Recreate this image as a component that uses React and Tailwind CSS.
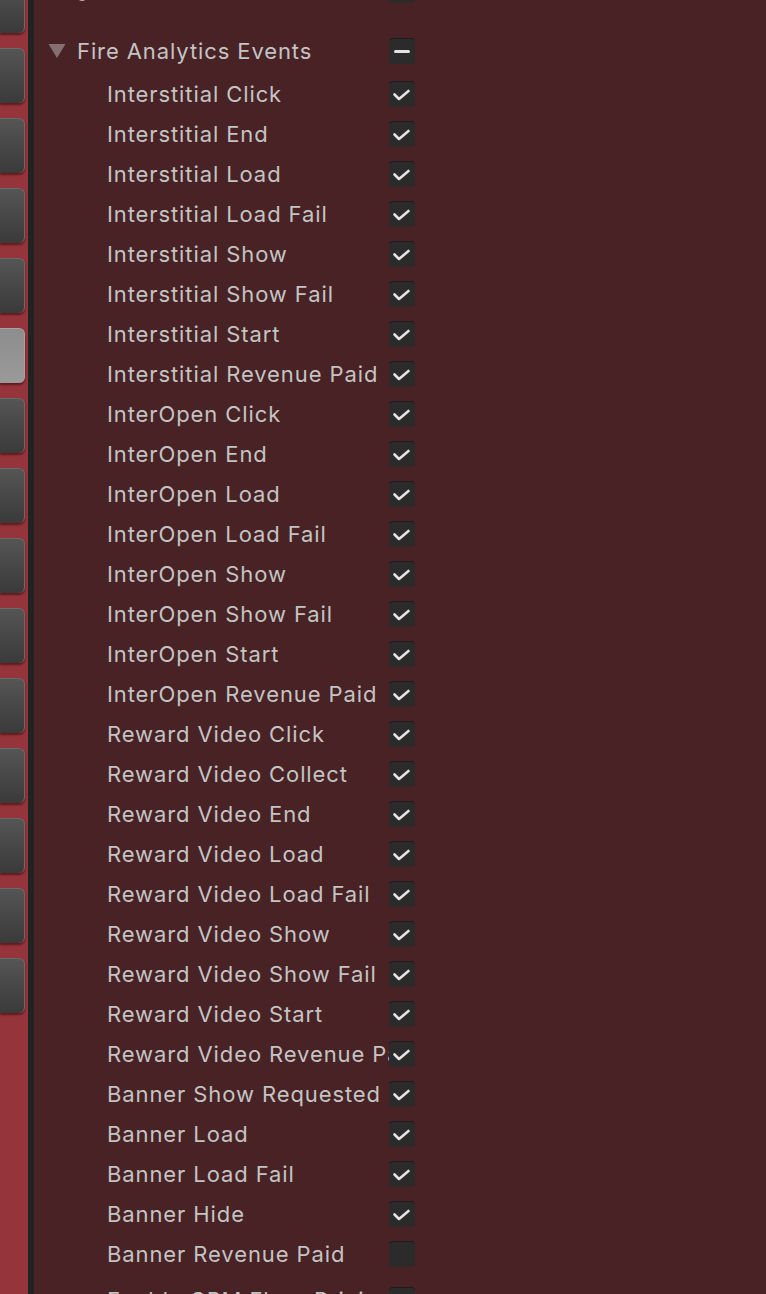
import React from "react";

const events = [
  ["Interstitial Click", true],
  ["Interstitial End", true],
  ["Interstitial Load", true],
  ["Interstitial Load Fail", true],
  ["Interstitial Show", true],
  ["Interstitial Show Fail", true],
  ["Interstitial Start", true],
  ["Interstitial Revenue Paid", true],
  ["InterOpen Click", true],
  ["InterOpen End", true],
  ["InterOpen Load", true],
  ["InterOpen Load Fail", true],
  ["InterOpen Show", true],
  ["InterOpen Show Fail", true],
  ["InterOpen Start", true],
  ["InterOpen Revenue Paid", true],
  ["Reward Video Click", true],
  ["Reward Video Collect", true],
  ["Reward Video End", true],
  ["Reward Video Load", true],
  ["Reward Video Load Fail", true],
  ["Reward Video Show", true],
  ["Reward Video Show Fail", true],
  ["Reward Video Start", true],
  ["Reward Video Revenue Paid", true],
  ["Banner Show Requested", true],
  ["Banner Load", true],
  ["Banner Load Fail", true],
  ["Banner Hide", true],
  ["Banner Revenue Paid", false],
];

// left toolbar: 15 buttons, the 6th one is the selected (light) one
const tabs = Array.from({ length: 15 }, (_, i) => i === 5);

const Checkbox = ({ state }) => (
  <div className="w-[26px] h-[26px] shrink-0 rounded-[4px] bg-[#2b2b2b] border-t border-[#1c1c1c] flex items-center justify-center">
    {state === "on" && (
      <svg width="26" height="26" viewBox="0 0 26 26" className="-mt-px">
        <path d="M5.5 13.5 L10 18 L19.5 10" fill="none" stroke="#e4e4e4" strokeWidth="2.6" strokeLinecap="round" strokeLinejoin="round" />
      </svg>
    )}
    {state === "mixed" && <div className="w-[16px] h-[3px] rounded-full bg-[#e4e4e4] -mt-px" />}
  </div>
);

const Row = ({ label, state }) => (
  <div className="h-[40px] shrink-0 flex items-center pl-[73px]">
    <div className="w-[282px] overflow-hidden whitespace-nowrap text-[22px] tracking-[0.9px] text-[#c4c4c4]">{label}</div>
    <Checkbox state={state} />
  </div>
);

export default function App() {
  return (
    <div
      className="flex w-[766px] h-[1294px] overflow-hidden bg-[#482224]"
      style={{ fontFamily: "Inter, 'Noto Sans', sans-serif" }}
    >
      {/* toolbar strip */}
      <div className="w-[28px] shrink-0 bg-[#95343a] flex flex-col gap-[15px] -mt-[22px]">
        {tabs.map((sel, i) => (
          <div
            key={i}
            className={`w-[25px] h-[55px] shrink-0 rounded-r-[6px] border-t border-r ${
              sel
                ? "bg-gradient-to-b from-[#8d8d8d] to-[#9a9a9a] border-[#a4a4a4]"
                : "bg-gradient-to-b from-[#555555] to-[#3a3a3a] border-[#6a6a6a]"
            } shadow-[0_2px_2px_rgba(60,10,12,0.6)]`}
          />
        ))}
      </div>
      <div className="w-[6px] shrink-0 bg-[#222222]" />

      <div className="flex-1 flex flex-col -mt-[32px]">
        {/* row above, scrolled almost out of view */}
        <div className="h-[40px] shrink-0 flex items-center pl-[14px]">
          <div className="w-[341px] overflow-hidden whitespace-nowrap text-[22px] tracking-[0.9px] text-[#c4c4c4]">Log Events</div>
          <div className="mt-[4px]">
            <Checkbox state="off" />
          </div>
        </div>

        <div className="h-[40px] shrink-0 mt-[23px] flex items-center pl-[14px]">
          <svg width="18" height="16" viewBox="0 0 18 16" className="mr-[11px]">
            <path d="M0.5 1 L17.5 1 L9 15 Z" fill="#857070" />
          </svg>
          <div className="w-[312px] whitespace-nowrap text-[22px] tracking-[0.9px] text-[#c4c4c4]">Fire Analytics Events</div>
          <Checkbox state="mixed" />
        </div>

        <div className="mt-[3px] shrink-0 flex flex-col">
          {events.map(([label, on]) => (
            <Row key={label} label={label} state={on ? "on" : "off"} />
          ))}
        </div>

        <div className="mt-[6px] shrink-0">
          <Row label="Enable CPM Floor Pricing" state="off" />
        </div>
      </div>
    </div>
  );
}
